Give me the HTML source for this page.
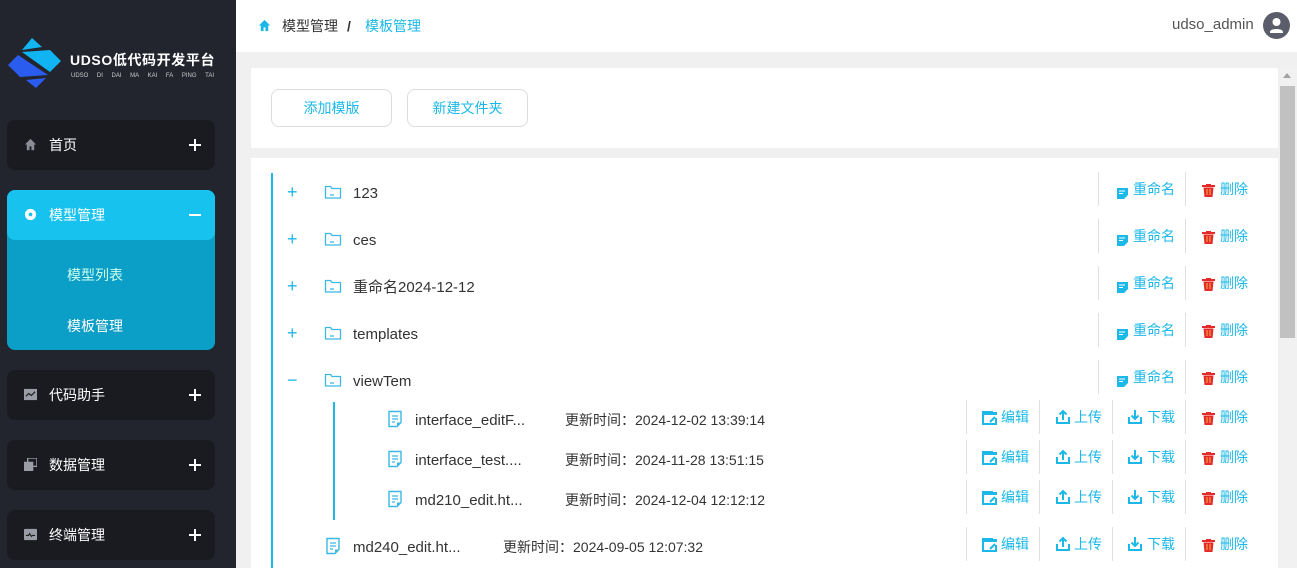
<!DOCTYPE html>
<html><head><meta charset="utf-8"><style>
*{margin:0;padding:0;box-sizing:border-box}
body{width:1297px;height:568px;overflow:hidden;font-family:"Liberation Sans","Noto Sans CJK SC",sans-serif;background:#f0f0f0;position:relative;font-size:14px}
.side{position:absolute;left:0;top:0;width:236px;height:568px;background:#22252e}
.mi{position:absolute;left:7px;width:208px;height:50px;border-radius:8px;background:#1a1b20;color:#fff;font-size:14px}
.mi .ic{position:absolute;left:17px;top:18px;width:13px;height:13px}
.mi .t{position:absolute;left:42px;top:0;line-height:50px}
.mi .pl{position:absolute;right:14px;top:19px;width:12px;height:12px}
.mi .pl:before{content:"";position:absolute;left:0;top:5px;width:12px;height:2px;background:#fff}
.mi .pl.p:after{content:"";position:absolute;left:5px;top:0;width:2px;height:12px;background:#fff}
.abs{position:absolute;line-height:20px}
.hdr{position:absolute;left:236px;top:0;width:1061px;height:52px;background:#fff}
.card{position:absolute;background:#fff}
.btn{position:absolute;top:89px;width:121px;height:38px;border:1px solid #dcdcdc;border-radius:8px;color:#1cb8e8;text-align:center;line-height:36px;font-size:14px}
.blue{color:#1cb8e8}
.sep{position:absolute;width:1px;height:34px;background:#e0e0e0}
.act{font-size:14px;color:#1cb8e8}
</style></head><body>
<div class="side">
 <svg class="abs" style="left:6px;top:37px" width="56" height="56" viewBox="0 0 56 56">
  <polygon points="26,1 36,10 16,13" fill="#12b6f0"/>
  <polygon points="16,15 44,13 55,24 44,35" fill="#10b4f2"/>
  <polygon points="12,18 2,28 14,40 42,38" fill="#2a5cf0"/>
  <polygon points="20,43 40,41 30,51" fill="#2a5cf0"/>
 </svg>
 <div class="abs" style="left:70px;top:50px;color:#fff;font-size:14px;font-weight:bold;letter-spacing:0.6px">UDSO低代码开发平台</div>
 <div class="abs" style="left:71px;top:66px;width:143px;color:#ccc;font-size:6px;display:flex;justify-content:space-between"><span>UDSO</span><span>DI</span><span>DAI</span><span>MA</span><span>KAI</span><span>FA</span><span>PING</span><span>TAI</span></div>
 <div class="mi" style="top:120px"><svg class="ic" viewBox="0 0 14 14"><path d="M7 1L1 7h2v6h3V9h2v4h3V7h2z" fill="#8a8d96"/></svg><span class="t">首页</span><span class="pl p"></span></div>
 <div class="abs" style="left:7px;top:190px;width:208px;height:160px;border-radius:8px;background:#0b9ec6"></div>
 <div class="mi" style="top:190px;background:#17c2ef"><svg class="ic" viewBox="0 0 14 14"><circle cx="7" cy="7" r="6" fill="#fff"/><circle cx="7" cy="7" r="2" fill="#17c2ef"/></svg><span class="t">模型管理</span><span class="pl"></span></div>
 <div class="abs" style="left:67px;top:265px;color:#cfe;font-size:14px">模型列表</div>
 <div class="abs" style="left:67px;top:316px;color:#fff;font-size:14px">模板管理</div>
 <div class="mi" style="top:370px"><svg class="ic" viewBox="0 0 14 14"><rect x="0" y="1" width="14" height="12" fill="#9a9da6"/><path d="M2 9l3-3 3 2 4-4" stroke="#222" fill="none" stroke-width="1.3"/></svg><span class="t">代码助手</span><span class="pl p"></span></div>
 <div class="mi" style="top:440px"><svg class="ic" viewBox="0 0 14 14"><rect x="4" y="0" width="10" height="9" fill="none" stroke="#9a9da6" stroke-width="1.5"/><rect x="0" y="4" width="10" height="10" fill="#9a9da6"/></svg><span class="t">数据管理</span><span class="pl p"></span></div>
 <div class="mi" style="top:510px"><svg class="ic" viewBox="0 0 14 14"><rect x="0" y="1" width="14" height="12" rx="1" fill="#9a9da6"/><path d="M2 8h3l1-2 2 3 1-1h3" stroke="#222" fill="none" stroke-width="1.2"/></svg><span class="t">终端管理</span><span class="pl p"></span></div>
</div>
<div class="hdr">
 <svg class="abs" style="left:22px;top:19px" width="13" height="13" viewBox="0 0 14 14"><path d="M7 1L1 7h2v6h3V9h2v4h3V7h2z" fill="#1cb8e8"/></svg>
 <div class="abs" style="left:46px;top:16px;color:#333">模型管理</div>
 <div class="abs" style="left:111px;top:16px;color:#333;font-weight:bold">/</div>
 <div class="abs" style="left:129px;top:16px;color:#1cb8e8">模板管理</div>
 <div class="abs" style="left:936px;top:15px;color:#555;font-size:15px">udso_admin</div>
 <svg class="abs" style="left:1027px;top:12px" width="27" height="27" viewBox="0 0 27 27"><circle cx="13.5" cy="13.5" r="13.5" fill="#5b5e6a"/><circle cx="13.5" cy="10" r="4" fill="#fff"/><path d="M7 20c0-4 13-4 13 0v1H7z" fill="#fff"/></svg>
</div>
<div class="card" style="left:251px;top:68px;width:1027px;height:80px"></div>
<div class="btn" style="left:271px">添加模版</div>
<div class="btn" style="left:407px">新建文件夹</div>
<div class="card" style="left:251px;top:158px;width:1027px;height:410px"></div>
<div class="abs" style="left:1279px;top:68px;width:18px;height:500px;background:#f1f1f1"></div>
<div class="abs" style="left:1280px;top:86px;width:15px;height:252px;background:#c1c1c1"></div>
<div class="abs" style="left:1283px;top:73px;width:0;height:0;border-left:4px solid transparent;border-right:4px solid transparent;border-bottom:5px solid #a3a3a3"></div>
<div class="abs" style="left:271px;top:173px;width:2px;height:395px;background:#1cb8e8"></div>
<div class="abs" style="left:333px;top:402px;width:2px;height:118px;background:#1cb8e8"></div>
<div id="rows"></div>
<script>
var folder='<svg width="18" height="16" viewBox="0 0 18 16"><path d="M1.5 2.5h5l1.5 2h8.5v9.5h-15z" fill="none" stroke="#3bb8e6" stroke-width="1.3" stroke-linejoin="round"/><path d="M6 11h4" stroke="#3bb8e6" stroke-width="1.3"/></svg>';
var file='<svg width="16" height="18" viewBox="0 0 16 18"><path d="M2 1.5h12v11l-4 4H2z" fill="none" stroke="#3bb8e6" stroke-width="1.4"/><path d="M5 6h6M5 9h6M5 12h3" stroke="#3bb8e6" stroke-width="1.3"/><path d="M10 16.5v-4h4" fill="#3bb8e6"/></svg>';
var ren='<svg width="11" height="11" viewBox="0 0 11 11"><path d="M0 0h11v7l-4 4H0z" fill="#1cb8e8"/><path d="M2 3h6M2 5.5h4" stroke="#fff"/></svg>';
var del='<svg width="13" height="13" viewBox="0 0 13 13"><rect x="0" y="1" width="13" height="2" fill="#e52a2a"/><rect x="4" y="0" width="5" height="2" fill="#e52a2a"/><path d="M1.5 3.5h10l-1 9.5h-8z" fill="#e52a2a"/><path d="M5 5v6M8 5v6" stroke="#f3b24a" stroke-width="1"/></svg>';
var edit='<svg width="16" height="14" viewBox="0 0 16 14"><path d="M14 7v6H1V1h10" fill="none" stroke="#1cb8e8" stroke-width="2"/><rect x="1" y="1" width="14" height="3" fill="#1cb8e8"/><path d="M8 11l5-5" stroke="#1cb8e8" stroke-width="2"/></svg>';
var up='<svg width="16" height="16" viewBox="0 0 16 16"><path d="M2 8v6h12V8" fill="none" stroke="#1cb8e8" stroke-width="2"/><path d="M8 11V2M4.5 5.5L8 2l3.5 3.5" fill="none" stroke="#1cb8e8" stroke-width="2"/></svg>';
var down='<svg width="16" height="16" viewBox="0 0 16 16"><path d="M2 8v6h12V8" fill="none" stroke="#1cb8e8" stroke-width="2"/><path d="M8 1v9M4.5 6.5L8 10l3.5-3.5" fill="none" stroke="#1cb8e8" stroke-width="2"/></svg>';
var h='';
function a(x,y,s){return '<div class="abs" style="left:'+x+'px;top:'+y+'px">'+s+'</div>';}
var folders=[['123',193,'+'],['ces',240,'+'],['重命名2024-12-12',287,'+'],['templates',334,'+'],['viewTem',381,'−']];
folders.forEach(function(f){var y=f[1];var ay=y-4;
 h+=a(287,y-11,'<span class="blue" style="font-size:18px">'+f[2]+'</span>');
 h+=a(324,y-9,folder);
 h+=a(353,y-10,'<span style="color:#333;font-size:15px">'+f[0]+'</span>');
 h+='<div class="sep" style="left:1098px;top:'+(ay-17)+'px"></div><div class="sep" style="left:1185px;top:'+(ay-17)+'px"></div>';
 h+=a(1117,ay-5,ren)+a(1133,ay-10,'<span class="act">重命名</span>');
 h+=a(1202,ay-7,del)+a(1220,ay-10,'<span class="act">删除</span>');
});
var files=[['interface_editF...','2024-12-02 13:39:14',420,387,415,565],['interface_test....','2024-11-28 13:51:15',460,387,415,565],['md210_edit.ht...','2024-12-04 12:12:12',500,387,415,565],['md240_edit.ht...','2024-09-05 12:07:32',547,325,353,503]];
files.forEach(function(f){var y=f[2];var ay=y-3;
 h+=a(f[3],y-10,file);
 h+=a(f[4],y-10,'<span style="color:#333;font-size:15px">'+f[0]+'</span>');
 h+=a(f[5],y-10,'<span style="color:#333;font-size:14px">更新时间：'+f[1]+'</span>');
 [966,1039,1112,1185].forEach(function(x){h+='<div class="sep" style="left:'+x+'px;top:'+(ay-17)+'px"></div>';});
 h+=a(982,ay-7,edit)+a(1001,ay-10,'<span class="act">编辑</span>');
 h+=a(1055,ay-8,up)+a(1074,ay-10,'<span class="act">上传</span>');
 h+=a(1127,ay-8,down)+a(1147,ay-10,'<span class="act">下载</span>');
 h+=a(1202,ay-7,del)+a(1220,ay-10,'<span class="act">删除</span>');
});
document.getElementById('rows').innerHTML=h;
</script>
</body></html>
